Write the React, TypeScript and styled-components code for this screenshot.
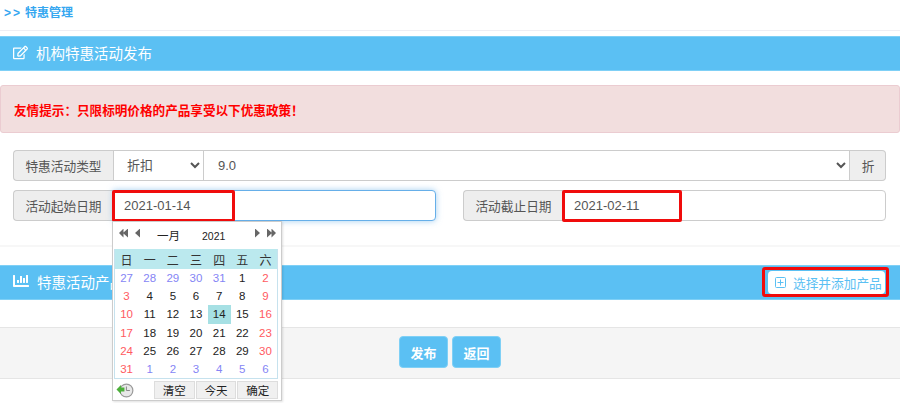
import React from 'react';
import styled, { createGlobalStyle } from 'styled-components';
import { FaRegEdit, FaChartBar } from 'react-icons/fa';

const BLUE = '#5bc0f3';
const FONT = '"Liberation Sans", "Noto Sans CJK SC", sans-serif';

const weekDays = ['日', '一', '二', '三', '四', '五', '六'];

type Tone = 'normal' | 'weekend' | 'other';

interface Day {
  label: number;
  tone: Tone;
  selected?: boolean;
}

const buildDays = (): Day[] => {
  const days: Day[] = [];
  [27, 28, 29, 30, 31].forEach(label => days.push({ label, tone: 'other' }));
  for (let label = 1; label <= 31; label++) {
    const column = (label + 4) % 7;
    days.push({
      label,
      tone: column === 0 || column === 6 ? 'weekend' : 'normal',
      selected: label === 14,
    });
  }
  [1, 2, 3, 4, 5, 6].forEach(label => days.push({ label, tone: 'other' }));
  return days;
};

const toneColors: Record<Tone, string> = {
  normal: '#222',
  weekend: '#ff5a5f',
  other: '#8585f5',
};

export default function App() {
  return (
    <>
      <GlobalStyle />
      <Breadcrumb>
        <Chevrons>&gt;&gt;</Chevrons>特惠管理
      </Breadcrumb>

      <SectionBar>
        <SectionTitle>
          <FaRegEdit size={15} />
          机构特惠活动发布
        </SectionTitle>
      </SectionBar>

      <Alert>{'友情提示\uFF1A只限标明价格的产品享受以下优惠政策\uFF01'}</Alert>

      <Form>
        <InputGroup>
          <Addon>特惠活动类型</Addon>
          <TypeSelect defaultValue="折扣">
            <option>折扣</option>
          </TypeSelect>
          <ValueSelect defaultValue="9.0">
            <option>9.0</option>
          </ValueSelect>
          <UnitAddon>折</UnitAddon>
        </InputGroup>

        <DateRow>
          <InputGroup>
            <Addon>活动起始日期</Addon>
            <DateInput $focused readOnly value="2021-01-14" />
            <Highlight $width={123} />
            <Calendar>
              <CalendarNav>
                <NavArrows>
                  <Arrow $double $left />
                  <Arrow $left />
                </NavArrows>
                <MonthLabel>一月</MonthLabel>
                <YearLabel>2021</YearLabel>
                <NavArrows>
                  <Arrow />
                  <Arrow $double />
                </NavArrows>
              </CalendarNav>
              <DayGrid>
                {weekDays.map(day => (
                  <WeekHead key={day}>{day}</WeekHead>
                ))}
                {buildDays().map((day, i) => (
                  <DayCell key={i} $tone={day.tone} $selected={day.selected}>
                    {day.label}
                  </DayCell>
                ))}
              </DayGrid>
              <CalendarFooter>
                <HistoryIcon viewBox="0 0 18 18">
                  <circle cx="10.5" cy="9.5" r="6.5" fill="#e8e8e8" stroke="#999" strokeWidth="1.2" />
                  <path d="M10.5 5.5v4h3.5" fill="none" stroke="#888" strokeWidth="1" />
                  <path d="M0.5 8.5 5 4v2.5h3.5v4H5V13z" fill="#4caf3a" />
                </HistoryIcon>
                <CalendarButton>清空</CalendarButton>
                <CalendarButton>今天</CalendarButton>
                <CalendarButton>确定</CalendarButton>
              </CalendarFooter>
            </Calendar>
          </InputGroup>

          <InputGroup>
            <Addon>活动截止日期</Addon>
            <DateInput readOnly value="2021-02-11" />
            <Highlight $width={120} />
          </InputGroup>
        </DateRow>
      </Form>

      <Divider />

      <ProductBar>
        <SectionTitle>
          <FaChartBar size={16} />
          特惠活动产品
        </SectionTitle>
        <AddButton>
          <PlusBox viewBox="0 0 11 11">
            <rect x="0.5" y="0.5" width="10" height="10" rx="1" fill="none" stroke="currentColor" />
            <path d="M5.5 2.5v6M2.5 5.5h6" stroke="currentColor" />
          </PlusBox>
          选择并添加产品
          <ButtonHighlight />
        </AddButton>
      </ProductBar>

      <Footer>
        <ActionButton>发布</ActionButton>
        <ActionButton>返回</ActionButton>
      </Footer>
    </>
  );
}

const GlobalStyle = createGlobalStyle`
  html, body {
    margin: 0;
    height: 403px;
    overflow: hidden;
    background: #fff;
    font-family: ${FONT};
    font-size: 13px;
    color: #555;
  }
  * {
    box-sizing: border-box;
  }
`;

const Breadcrumb = styled.div`
  height: 31px;
  padding: 5px 0 0 4px;
  border-bottom: 1px solid #eeeef4;
  font-size: 12px;
  line-height: 16px;
  font-weight: bold;
  color: #35a7f0;
`;

const Chevrons = styled.span`
  letter-spacing: 2px;
  margin-right: 3px;
`;

const SectionBar = styled.div`
  display: flex;
  align-items: center;
  justify-content: space-between;
  height: 35px;
  margin-top: 5px;
  padding: 0 15px 0 13px;
  background: ${BLUE};
  border-top: 1px solid #7fd0f6;
  border-bottom: 1px solid #7fd0f6;
`;

const ProductBar = styled(SectionBar)`
  margin-top: 18px;
`;

const SectionTitle = styled.div`
  display: flex;
  align-items: center;
  gap: 8px;
  margin-top: -3px;
  font-size: 14.5px;
  color: #fff;
`;

const Alert = styled.div`
  height: 48px;
  margin-top: 14px;
  padding-left: 13px;
  display: flex;
  align-items: center;
  background: #f2dede;
  border: 1px solid #ebccd1;
  border-radius: 3px;
  font-size: 12.6px;
  font-weight: bold;
  color: #ff0000;
`;

const Form = styled.div`
  display: flex;
  flex-direction: column;
  gap: 9px;
  margin-top: 17px;
  padding: 0 14px 0 13px;
`;

const DateRow = styled.div`
  display: grid;
  grid-template-columns: 1fr 1fr;
  gap: 27px;
`;

const InputGroup = styled.div`
  position: relative;
  display: flex;
  height: 31px;
`;

const Addon = styled.span`
  flex: none;
  width: 100px;
  display: flex;
  align-items: center;
  justify-content: center;
  background: #eee;
  border: 1px solid #ccc;
  border-right: 0;
  border-radius: 4px 0 0 4px;
  font-size: 12.7px;
`;

const UnitAddon = styled(Addon)`
  width: 36px;
  padding-left: 1px;
  border: 1px solid #ccc;
  border-left: 0;
  border-radius: 0 4px 4px 0;
`;

const fieldCss = `
  height: 31px;
  border: 1px solid #ccc;
  background-color: #fff;
  font-family: ${FONT};
  font-size: 13px;
  color: #555;
  outline: none;
`;

const TypeSelect = styled.select`
  ${fieldCss}
  flex: none;
  width: 91px;
  padding-left: 9px;
`;

const ValueSelect = styled.select`
  ${fieldCss}
  flex: 1;
  min-width: 0;
  margin-left: -1px;
  padding-left: 10px;
`;

const DateInput = styled.input<{ $focused?: boolean }>`
  ${fieldCss}
  flex: 1;
  min-width: 0;
  padding: 0 10px;
  border-radius: 0 4px 4px 0;
  border-color: ${p => (p.$focused ? '#66afe9' : '#ccc')};
  box-shadow: ${p => (p.$focused ? '0 0 6px rgba(102, 175, 233, 0.6)' : 'none')};
`;

const Highlight = styled.div<{ $width: number }>`
  position: absolute;
  left: 99px;
  top: 0;
  width: ${p => p.$width}px;
  height: 32px;
  border: 3px solid #f00c0c;
  border-radius: 2px;
  pointer-events: none;
`;

const Calendar = styled.div`
  position: absolute;
  left: 99px;
  top: 31px;
  z-index: 2;
  width: 170px;
  height: 180px;
  padding: 0 3px 0 1px;
  background: #fff;
  border: 1px solid #ccc;
  box-shadow: 1px 1px 2px rgba(0, 0, 0, 0.12);
  font-size: 11.5px;
  color: #222;
`;

const CalendarNav = styled.div`
  display: flex;
  align-items: flex-start;
  height: 27px;
  padding: 6px 2px 0 5px;
`;

const NavArrows = styled.div`
  display: flex;
  align-items: center;
  gap: 7px;
  height: 10px;
`;

const Arrow = styled.span<{ $double?: boolean; $left?: boolean }>`
  display: block;
  width: ${p => (p.$double ? 9 : 5)}px;
  height: 9px;
  background: #666;
  clip-path: ${p => {
    if (p.$double) {
      return p.$left
        ? 'polygon(0 50%, 50% 0, 50% 45%, 100% 0, 100% 100%, 50% 55%, 50% 100%)'
        : 'polygon(0 0, 50% 45%, 50% 0, 100% 50%, 50% 100%, 50% 55%, 0 100%)';
    }
    return p.$left
      ? 'polygon(0 50%, 100% 0, 100% 100%)'
      : 'polygon(0 0, 100% 50%, 0 100%)';
  }};
`;

const MonthLabel = styled.span`
  margin: -1px 0 0 17px;
  width: 45px;
  font-size: 11.5px;
`;

const YearLabel = styled.span`
  margin: 2px 0 0 0;
  flex: 1;
  font-size: 10.5px;
`;

const DayGrid = styled.div`
  display: grid;
  grid-template-columns: repeat(7, 1fr);
  grid-template-rows: 20px;
  grid-auto-rows: 18.2px;
  border: 1px solid #c6e2ee;
  border-top: 0;
`;

const WeekHead = styled.div`
  display: flex;
  align-items: center;
  justify-content: center;
  background: #bbe9ee;
  color: #333;
  font-size: 12px;
`;

const DayCell = styled.div<{ $tone: Tone; $selected?: boolean }>`
  display: flex;
  align-items: center;
  justify-content: center;
  color: ${p => (p.$selected ? '#222' : toneColors[p.$tone])};
  background: ${p => (p.$selected ? '#a6e0e4' : 'transparent')};
`;

const CalendarFooter = styled.div`
  display: flex;
  align-items: center;
  gap: 1px;
  height: 20px;
  margin-top: 1px;
  padding-left: 2px;
`;

const HistoryIcon = styled.svg`
  width: 18px;
  height: 18px;
  margin-right: 19px;
`;

const CalendarButton = styled.button`
  width: 41px;
  height: 18px;
  padding: 0;
  background: #f0f0f0;
  border: 1px solid #ddd;
  font-family: ${FONT};
  font-size: 11.5px;
  color: #222;
`;

const Divider = styled.div`
  height: 2px;
  margin-top: 24px;
  background: #f7f7f7;
`;

const AddButton = styled.button`
  position: relative;
  display: flex;
  align-items: center;
  gap: 7px;
  width: 117px;
  height: 23px;
  padding: 0 0 0 7px;
  background: #fff;
  border: 0;
  border-radius: 4px;
  font-family: ${FONT};
  font-size: 12.7px;
  font-weight: 400;
  color: ${BLUE};
  white-space: nowrap;
`;

const PlusBox = styled.svg`
  flex: none;
  width: 11px;
  height: 11px;
`;

const ButtonHighlight = styled.span`
  position: absolute;
  inset: -4px -4px -3px -6px;
  border: 3px solid #f00c0c;
  border-radius: 3px;
`;

const Footer = styled.div`
  display: flex;
  justify-content: center;
  gap: 4px;
  height: 52px;
  margin-top: 27px;
  padding-top: 8px;
  background: #f5f5f5;
  border-top: 1px solid #e5e5e5;
  border-bottom: 1px solid #e5e5e5;
`;

const ActionButton = styled.button`
  width: 49px;
  height: 32px;
  padding: 0;
  background: ${BLUE};
  border: 1px solid #7fd0f6;
  border-radius: 4px;
  font-family: ${FONT};
  font-size: 13px;
  font-weight: bold;
  color: #fff;
`;
